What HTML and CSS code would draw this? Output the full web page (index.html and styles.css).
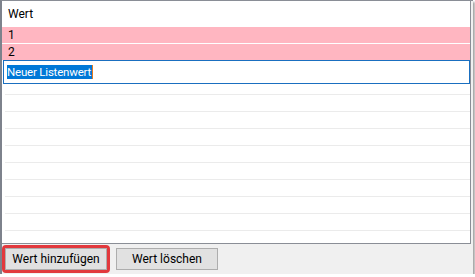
FILE: index.html
```html
<!DOCTYPE html>
<html lang="de">
<head>
    <meta charset="UTF-8">
    <title>Listenwerte</title>
    <link rel="stylesheet" href="styles.css">
</head>
<body>
    <div class="window">
        <div class="list">
            <div class="list-header">Wert</div>
            <div class="row marked">1</div>
            <div class="row marked">2</div>
            <div class="editor"><span class="selection">Neuer Listenwert</span><span class="caret"></span></div>
            <div class="empty-rows">
                <div class="empty-row"></div>
                <div class="empty-row"></div>
                <div class="empty-row"></div>
                <div class="empty-row"></div>
                <div class="empty-row"></div>
                <div class="empty-row"></div>
                <div class="empty-row"></div>
                <div class="empty-row"></div>
                <div class="empty-row"></div>
            </div>
        </div>
        <div class="button-bar">
            <div class="highlight">
                <button class="btn">Wert hinzufügen</button>
            </div>
            <button class="btn">Wert löschen</button>
        </div>
    </div>
</body>
</html>
```

FILE: styles.css
```css
body {
    margin: 0;
    background-color: #ffffff;
    font-family: Roboto, "Noto Sans", sans-serif;
    font-size: 12px;
    color: #000;
}
.window {
    width: 471px;
    height: 273px;
    border-top: 1px solid #8a8e96;
    border-left: 2px solid #7d828c;
    box-shadow: 2px 2px 2px rgba(0, 0, 0, 0.35);
    display: flex;
    flex-direction: column;
    background-color: #f0f0f0;
}
.list {
    height: 242px;
    background-color: #fff;
    border-right: 1px solid #8a8e96;
    border-bottom: 1px solid #8a8e96;
    margin-right: 2px;
    overflow: hidden;
}
.list-header {
    height: 26px;
    line-height: 26px;
    padding-left: 6px;
}
.row {
    height: 16px;
    line-height: 16px;
    padding-left: 6px;
    border-bottom: 1px solid #fff;
}
.row.marked {
    background-color: #ffb6c1;
}
.row.marked + .editor {
    margin-top: -1px;
}
.editor {
    margin-left: 1px;
    height: 22px;
    border: 1px solid #1a6fc0;
    display: flex;
    align-items: center;
    padding-left: 3px;
    margin-bottom: 10px;
    font-size: 11.5px;
    letter-spacing: -0.2px;
}
.selection {
    background-color: #0078d7;
    color: #fff;
    line-height: 14px;
    padding-right: 1px;
}
.caret {
    width: 1px;
    height: 14px;
    background-color: #e87a1c;
}
.empty-row {
    height: 16px;
    border-top: 1px solid #ebebeb;
    margin-left: 3px;
}
.button-bar {
    flex: 1;
    display: flex;
    align-items: center;
    padding-left: 0;
    gap: 6px;
}
.highlight {
    border: 3px solid #e2393d;
    border-radius: 4px;
    padding: 0;
}
.btn {
    font-family: Roboto, "Noto Sans", sans-serif;
    font-size: 12px;
    height: 22px;
    width: 102px;
    padding: 0;
    background-color: #e1e1e1;
    border: 1px solid #adadad;
    color: #000;
}
```
